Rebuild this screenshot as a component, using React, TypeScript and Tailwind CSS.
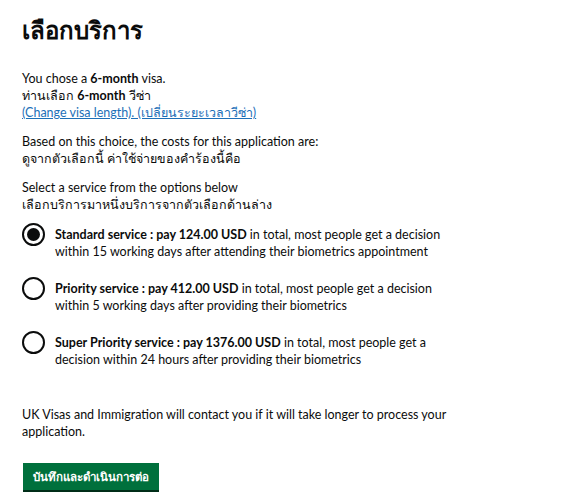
import React from 'react'

const options = [
  {
    title: 'Standard service : pay 124.00 USD',
    rest: ' in total, most people get a decision within 15 working days after attending their biometrics appointment',
    checked: true,
  },
  {
    title: 'Priority service : pay 412.00 USD',
    rest: ' in total, most people get a decision within 5 working days after providing their biometrics',
    checked: false,
  },
  {
    title: 'Super Priority service : pay 1376.00 USD',
    rest: ' in total, most people get a decision within 24 hours after providing their biometrics',
    checked: false,
  },
]

export default function App() {
  return (
    <div className="min-h-[495px] bg-white px-[22px] pt-[13px] text-[#0b0c0c] text-[12.5px] leading-[17px] font-['Lato','Noto_Sans',sans-serif]">
      <h1 className="text-[24px] leading-[34px] font-bold">เลือกบริการ</h1>

      <div className="mt-[23px]">
        <p>
          You chose a <b>6-month</b> visa.
        </p>
        <p>
          ท่านเลือก <b>6-month</b> วีซ่า
        </p>
        <p>
          <a href="#" className="text-[#1d70b8] underline">
            (Change visa length). (เปลี่ยนระยะเวลาวีซ่า)
          </a>
        </p>
      </div>

      <div className="mt-[12px]">
        <p>Based on this choice, the costs for this application are:</p>
        <p>ดูจากตัวเลือกนี้ ค่าใช้จ่ายของคำร้องนี้คือ</p>
      </div>

      <div className="mt-[12px]">
        <p>Select a service from the options below</p>
        <p>เลือกบริการมาหนึ่งบริการจากตัวเลือกด้านล่าง</p>
      </div>

      <div className="mt-[13px] flex flex-col gap-[20px] w-[430px]">
        {options.map(o => (
          <label key={o.title} className="flex items-start gap-[10px]">
            <span className="mt-[-3px] w-[23px] h-[23px] shrink-0 rounded-full border-2 border-[#0b0c0c] flex items-center justify-center">
              {o.checked && <span className="w-[13px] h-[13px] rounded-full bg-[#0b0c0c]" />}
            </span>
            <span>
              <b>{o.title}</b>
              {o.rest}
            </span>
          </label>
        ))}
      </div>

      <p className="mt-[38px] w-[440px]">
        UK Visas and Immigration will contact you if it will take longer to process your application.
      </p>

      <button className="mt-[23px] ml-[1px] bg-[#00703c] text-white font-bold text-[11.5px] px-[10px] h-[27px] shadow-[0_2px_0_#002d18]">
        บันทึกและดำเนินการต่อ
      </button>
    </div>
  )
}
